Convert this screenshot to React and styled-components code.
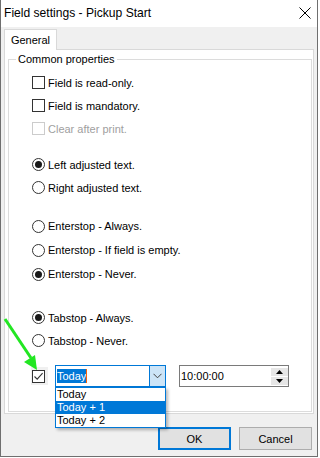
import React from 'react';
import styled, { createGlobalStyle } from 'styled-components';

const Global = createGlobalStyle`
  html, body { margin: 0; padding: 0; background: #ffffff; }
  body {
    font-family: "Liberation Sans", Arial, sans-serif;
    font-size: 11px;
    color: #000;
  }
  * { box-sizing: border-box; }
`;

const Window = styled.div`
  position: relative;
  width: 318px;
  height: 457px;
  background: #f0f0f0;
  border: 1px solid #6f6f6f;
  border-top: none;
  display: flex;
  flex-direction: column;
`;

const TitleBar = styled.div`
  height: 27px;
  flex: none;
  background: #ffffff;
  display: flex;
  align-items: center;
  padding: 0 6px 1px 3px;
  font-size: 12.1px;
`;

const Title = styled.div`
  flex: 1;
  white-space: nowrap;
`;

const CloseIcon = styled.svg`
  width: 12px;
  height: 12px;
  flex: none;
`;

const Body = styled.div`
  padding: 2px 3px 0 3px;
  display: flex;
  flex-direction: column;
`;

const TabStrip = styled.div`
  height: 20px;
  display: flex;
  align-items: flex-start;
`;

const Tab = styled.div`
  position: relative;
  z-index: 1;
  width: 53px;
  height: 21px;
  background: #ffffff;
  border: 1px solid #d9d9d9;
  border-bottom: none;
  display: flex;
  align-items: center;
  justify-content: center;
`;

const TabPanel = styled.div`
  height: 365px;
  background: #ffffff;
  border: 1px solid #d9d9d9;
  padding: 2px 1px 1px 3px;
  display: flex;
`;

const GroupBox = styled.fieldset`
  margin: 0;
  padding: 0;
  flex: 1;
  min-width: 0;
  border: 1px solid #dcdcdc;
`;

const Legend = styled.legend`
  margin-left: 7px;
  padding: 0 2px;
  line-height: 14px;
`;

const Options = styled.div`
  padding: 5px 0 0 23px;
  display: flex;
  flex-direction: column;
`;

const Group = styled.div`
  display: flex;
  flex-direction: column;
  margin-top: ${p => p.$gap || 0}px;
`;

const Row = styled.div`
  height: ${p => p.$h || 23}px;
  display: flex;
  align-items: center;
`;

const Label = styled.span`
  margin-left: 3px;
  white-space: nowrap;
  color: ${p => (p.$disabled ? '#a0a0a0' : '#000')};
`;

const Box = styled.span`
  width: 13px;
  height: 13px;
  flex: none;
  background: #ffffff;
  border: 1px solid ${p => (p.$disabled ? '#cccccc' : '#333333')};
  display: flex;
  align-items: center;
  justify-content: center;
`;

const Radio = styled.span`
  width: 13px;
  height: 13px;
  flex: none;
  border-radius: 50%;
  background: #ffffff;
  border: 1px solid #333333;
  display: flex;
  align-items: center;
  justify-content: center;
  &::after {
    content: '';
    width: 7px;
    height: 7px;
    border-radius: 50%;
    background: ${p => (p.$checked ? '#1a1a1a' : 'transparent')};
  }
`;

const CheckCell = styled.div`
  width: 17px;
  height: 18px;
  margin-left: -1px;
  padding-left: 1px;
  background: #f0f0f0;
  display: flex;
  align-items: center;
`;

const Combo = styled.div`
  position: relative;
  margin-left: 7px;
  width: 111px;
  height: 22px;
  border: 1px solid #0078d7;
  background: #ffffff;
  display: flex;
`;

const ComboValue = styled.div`
  flex: 1;
  display: flex;
  align-items: flex-start;
  padding: 3px 0 0 1px;
`;

const Selected = styled.span`
  height: 14px;
  line-height: 14px;
  background: #0078d7;
  color: #ffffff;
`;

const Caret = styled.span`
  width: 1px;
  height: 14px;
  background: #f7630c;
`;

const DropButton = styled.div`
  width: 16px;
  flex: none;
  background: #cce4f7;
  border-left: 1px solid #0078d7;
  display: flex;
  align-items: center;
  justify-content: center;
`;

const DropList = styled.div`
  position: absolute;
  z-index: 5;
  top: calc(100% + 1px);
  left: -1px;
  width: 111px;
  background: #ffffff;
  border: 1px solid #0078d7;
  box-shadow: 2px 2px 3px rgba(0, 0, 0, 0.28);
`;

const ListItem = styled.div`
  height: 13px;
  line-height: 13px;
  padding-left: 1px;
  white-space: nowrap;
  background: ${p => (p.$selected ? '#0078d7' : '#ffffff')};
  color: ${p => (p.$selected ? '#ffffff' : '#000')};
`;

const TimeField = styled.div`
  margin-left: 13px;
  width: 110px;
  height: 22px;
  border: 1px solid #7a7a7a;
  background: #ffffff;
  padding-left: 1px;
  display: flex;
  align-items: center;
`;

const TimeText = styled.span`
  flex: 1;
`;

const Spin = styled.div`
  width: 17px;
  height: 17px;
  display: flex;
  flex-direction: column;
  gap: 1px;
`;

const SpinButton = styled.div`
  flex: 1;
  background: #e6e6e6;
  display: flex;
  align-items: center;
  justify-content: center;
`;

const Footer = styled.div`
  display: flex;
  justify-content: flex-end;
  gap: 8px;
  padding: 13px 5px 0 0;
`;

const Button = styled.button`
  width: 73px;
  height: 23px;
  margin: 0;
  padding: 0;
  font: inherit;
  color: #000;
  background: #e1e1e1;
  border: ${p => (p.$default ? '2px solid #0078d7' : '1px solid #adadad')};
`;

const ArrowOverlay = styled.svg`
  position: absolute;
  left: 0;
  top: 0;
  width: 60px;
  height: 380px;
  pointer-events: none;
  z-index: 10;
`;

const CheckOption = ({ label, disabled }) => (
  <Row>
    <Box $disabled={disabled} />
    <Label $disabled={disabled}>{label}</Label>
  </Row>
);

const RadioOption = ({ label, checked, h }) => (
  <Row $h={h}>
    <Radio $checked={checked} />
    <Label>{label}</Label>
  </Row>
);

export default function App() {
  return (
    <>
      <Global />
      <Window>
        <TitleBar>
          <Title>Field settings - Pickup Start</Title>
          <CloseIcon viewBox="0 0 12 12">
            <path d="M0.5 0.5 L11.5 11.5 M11.5 0.5 L0.5 11.5" stroke="#000" strokeWidth="1" fill="none" />
          </CloseIcon>
        </TitleBar>
        <Body>
          <TabStrip>
            <Tab>General</Tab>
          </TabStrip>
          <TabPanel>
            <GroupBox>
              <Legend>Common properties</Legend>
              <Options>
                <Group>
                  <CheckOption label="Field is read-only." />
                  <CheckOption label="Field is mandatory." />
                  <CheckOption label="Clear after print." disabled />
                </Group>
                <Group $gap={13}>
                  <RadioOption label="Left adjusted text." checked />
                  <RadioOption label="Right adjusted text." />
                </Group>
                <Group $gap={15}>
                  <RadioOption label="Enterstop - Always." h={24} />
                  <RadioOption label="Enterstop - If field is empty." h={24} />
                  <RadioOption label="Enterstop - Never." checked h={24} />
                </Group>
                <Group $gap={20}>
                  <RadioOption label="Tabstop - Always." checked />
                  <RadioOption label="Tabstop - Never." />
                </Group>
                <Group $gap={13}>
                  <Row $h={22}>
                    <CheckCell>
                      <Box>
                        <svg width="11" height="11" viewBox="0 0 11 11">
                          <path d="M1.5 5.5 L4.2 8.2 L9.6 2.2" stroke="#333" strokeWidth="1.1" fill="none" />
                        </svg>
                      </Box>
                    </CheckCell>
                    <Combo>
                      <ComboValue>
                        <Selected>Today</Selected>
                        <Caret />
                      </ComboValue>
                      <DropButton>
                        <svg width="9" height="6" viewBox="0 0 9 6">
                          <path d="M0.5 0.8 L4.5 4.8 L8.5 0.8" stroke="#404040" strokeWidth="1" fill="none" />
                        </svg>
                      </DropButton>
                      <DropList>
                        <ListItem>Today</ListItem>
                        <ListItem $selected>Today + 1</ListItem>
                        <ListItem>Today + 2</ListItem>
                      </DropList>
                    </Combo>
                    <TimeField>
                      <TimeText>10:00:00</TimeText>
                      <Spin>
                        <SpinButton>
                          <svg width="7" height="4" viewBox="0 0 7 4">
                            <path d="M0 4 L3.5 0 L7 4 Z" fill="#000" />
                          </svg>
                        </SpinButton>
                        <SpinButton>
                          <svg width="7" height="4" viewBox="0 0 7 4">
                            <path d="M0 0 L7 0 L3.5 4 Z" fill="#000" />
                          </svg>
                        </SpinButton>
                      </Spin>
                    </TimeField>
                  </Row>
                </Group>
              </Options>
            </GroupBox>
          </TabPanel>
        </Body>
        <Footer>
          <Button $default>OK</Button>
          <Button>Cancel</Button>
        </Footer>
        <ArrowOverlay viewBox="0 0 60 380">
          <line x1="4" y1="319" x2="30" y2="358" stroke="#22e622" strokeWidth="3" />
          <polygon points="36,370 23,362 34,355" fill="#22e622" />
        </ArrowOverlay>
      </Window>
    </>
  );
}
